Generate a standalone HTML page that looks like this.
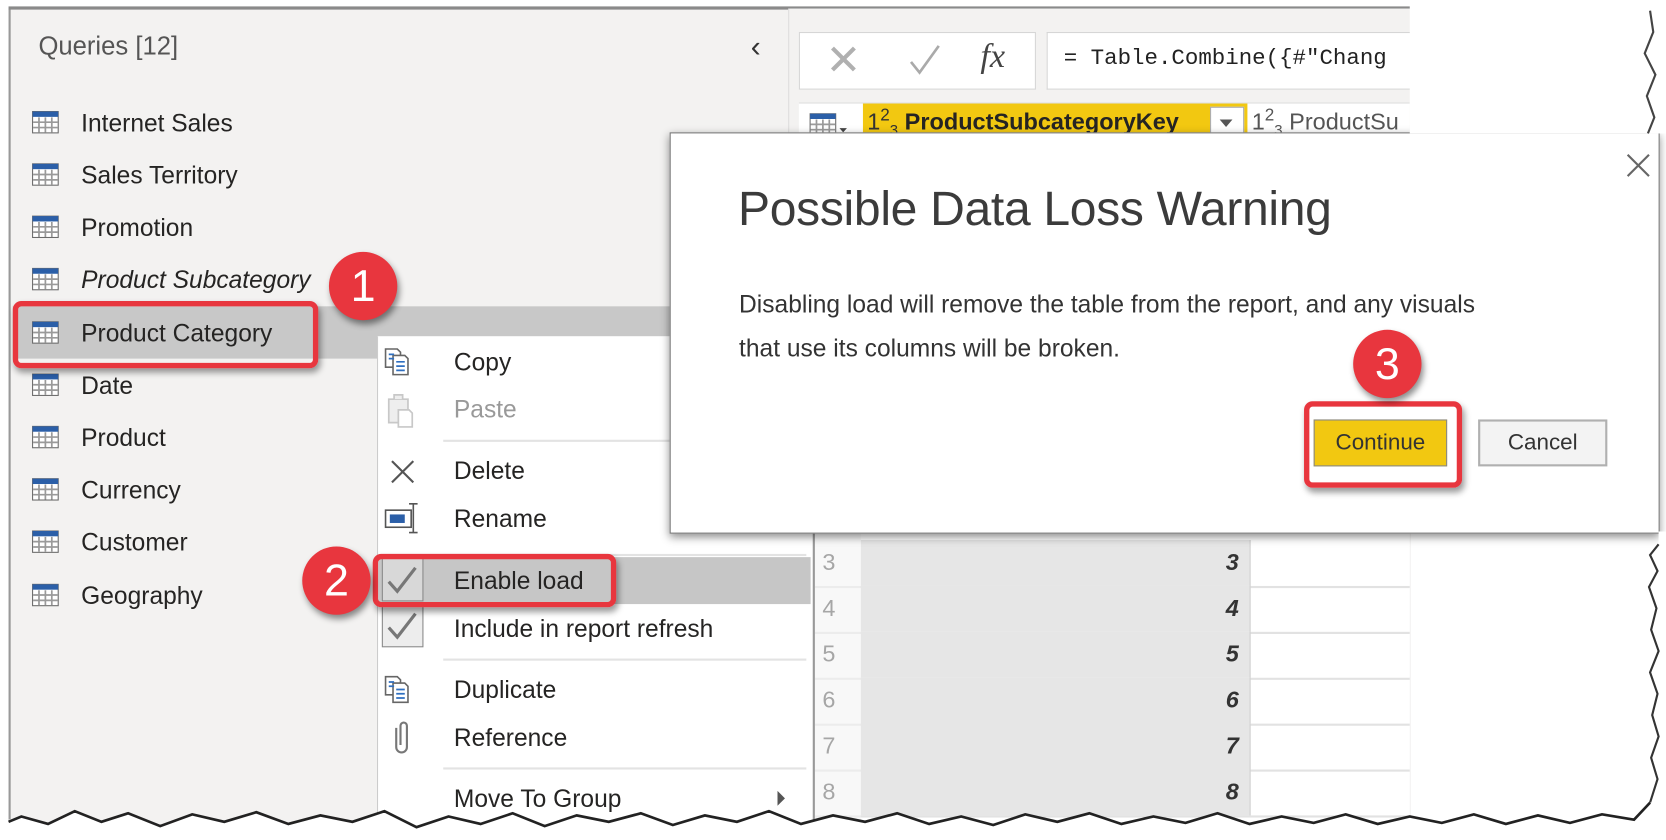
<!DOCTYPE html>
<html><head><meta charset="utf-8">
<style>
html,body{margin:0;padding:0;background:#fff;overflow:hidden;width:1666px;height:840px}
#w{position:absolute;left:0;top:0;width:1560px;height:787px;transform:scale(1.068,1.0673);transform-origin:0 0;font-family:"Liberation Sans",sans-serif;color:#222}
.a{position:absolute}
.q{position:absolute;left:76px;font-size:23px;color:#252423;line-height:28px}
.ti{position:absolute;left:30px;width:25px;height:21px}
.mi{position:absolute;left:425px;font-size:23px;color:#252423;line-height:28px}
.sep{position:absolute;left:415px;width:340px;height:2px;background:#e3e3e3}
.badge{position:absolute;width:64px;height:64px;border-radius:50%;background:#e8363e;color:#fff;font-size:42px;text-align:center;line-height:64px;box-shadow:2px 4px 6px rgba(0,0,0,.45)}
.redbox{position:absolute;border:5px solid #e8363e;border-radius:8px;box-shadow:2px 4px 6px rgba(0,0,0,.4)}
.row{position:absolute;left:760px;width:560px;height:43px;border-bottom:2px solid #e2e2e2}
.rn{position:absolute;left:10px;top:8px;font-size:22px;color:#333}
.rv{position:absolute;left:46px;width:364px;height:43px;background:#e6e6e6;border-right:1px solid #d0d0d0}
.rv span{position:absolute;right:10px;top:8px;font-size:22px;font-style:italic;font-weight:bold;color:#333}
</style></head><body><div id="w">
<!-- left panel -->
<div class="a" style="left:8px;top:8px;width:730px;height:770px;background:#f3f2f1;border-left:2px solid #999"></div>
<div class="a" style="left:8px;top:6px;width:1540px;height:3px;background:#8a8a8a"></div>
<div class="a" style="left:36px;top:30px;font-size:24px;color:#555">Queries [12]</div>
<div class="a" style="left:703px;top:28px;font-size:28px;color:#333">&#8249;</div>
<!-- highlight row -->
<div class="a" style="left:12px;top:287px;width:620px;height:49px;background:#c8c8c8"></div>

<svg class="a" style="left:0;top:0" width="60" height="600">
<defs><g id="ti"><rect x="0.5" y="0.5" width="24" height="20" fill="#fff" stroke="#6b6b6b"/><rect x="0.5" y="0.5" width="24" height="5" fill="#2b5fa8"/><path d="M1 10.5H24M1 15.5H24M6.5 6V20M12.5 6V20M18.5 6V20" stroke="#9a9a9a" stroke-width="1.6"/></g></defs>
<use href="#ti" x="30" y="104"/><use href="#ti" x="30" y="153"/><use href="#ti" x="30" y="202"/><use href="#ti" x="30" y="251"/><use href="#ti" x="30" y="301"/><use href="#ti" x="30" y="350"/><use href="#ti" x="30" y="399"/><use href="#ti" x="30" y="448"/><use href="#ti" x="30" y="497"/><use href="#ti" x="30" y="547"/>
</svg>
<div class="q" style="top:101px">Internet Sales</div>
<div class="q" style="top:150px">Sales Territory</div>
<div class="q" style="top:199px">Promotion</div>
<div class="q" style="top:248px;font-style:italic">Product Subcategory</div>
<div class="q" style="top:298px">Product Category</div>
<div class="q" style="top:347px">Date</div>
<div class="q" style="top:396px">Product</div>
<div class="q" style="top:445px">Currency</div>
<div class="q" style="top:494px">Customer</div>
<div class="q" style="top:544px">Geography</div>
<div class="redbox" style="left:12px;top:282px;width:276px;height:53px"></div>
<div class="badge" style="left:308px;top:236px">1</div>

<!-- right grid area -->
<div class="a" style="left:738px;top:8px;width:582px;height:770px;background:#f3f2f1;border-left:1px solid #ddd"></div>
<div class="a" style="left:748px;top:30px;width:220px;height:52px;background:#fff;border:1px solid #d6d6d6"></div>
<div class="a" style="left:773px;top:34px;font-size:40px;color:#b0b0b0;font-weight:100">&#x2715;</div>
<svg class="a" style="left:850px;top:40px" width="32" height="32"><path d="M3 18 L11 28 L29 3" stroke="#aaa" stroke-width="2.5" fill="none"/></svg>
<div class="a" style="left:918px;top:34px;font-size:32px;font-family:'Liberation Serif',serif;font-style:italic;color:#444">fx</div>
<div class="a" style="left:980px;top:30px;width:340px;height:52px;background:#fff;border:1px solid #d6d6d6;border-right:none"></div>
<div class="a" style="left:996px;top:44px;font-size:21px;font-family:'Liberation Mono',monospace;color:#222;white-space:nowrap;width:324px;overflow:hidden">= Table.Combine({#"Chang</div>
<div class="a" style="left:748px;top:96px;width:572px;height:34px;background:#fff;border-top:1px solid #ddd"></div>
<svg class="a" style="left:758px;top:106px" width="40" height="24"><rect x="0.5" y="0.5" width="24" height="20" fill="#fff" stroke="#6b6b6b"/><rect x="0.5" y="0.5" width="24" height="5" fill="#2b5fa8"/><path d="M1 10.5H24M1 15.5H24M6.5 6V20M12.5 6V20M18.5 6V20" stroke="#9a9a9a" stroke-width="1.6"/><path d="M28 14h7l-3.5 4z" fill="#444"/></svg>
<div class="a" style="left:808px;top:97px;width:360px;height:33px;background:#f2c811"></div>
<div class="a" style="left:812px;top:100px;font-size:22px;color:#333;white-space:nowrap">1<sup style="font-size:16px">2</sup><sub style="font-size:14px">3</sub> <b style="font-weight:bold;color:#252423">ProductSubcategoryKey</b></div>
<div class="a" style="left:1133px;top:100px;width:30px;height:28px;background:#fff;border:1px solid #aaa"></div>
<div class="a" style="left:1142px;top:112px;width:0;height:0;border-left:6px solid transparent;border-right:6px solid transparent;border-top:7px solid #555"></div>
<div class="a" style="left:1172px;top:100px;font-size:22px;color:#555;white-space:nowrap;width:148px;overflow:hidden">1<sup style="font-size:16px">2</sup><sub style="font-size:14px">3</sub> ProductSu</div>

<div class="a" style="left:760px;top:498px;width:560px;height:280px;background:#fff"></div>
<div class="row" style="top:506px"><div class="rv"><span>3</span></div><div class="rn">3</div></div>
<div class="row" style="top:549px"><div class="rv"><span>4</span></div><div class="rn">4</div></div>
<div class="row" style="top:592px"><div class="rv"><span>5</span></div><div class="rn">5</div></div>
<div class="row" style="top:635px"><div class="rv"><span>6</span></div><div class="rn">6</div></div>
<div class="row" style="top:678px"><div class="rv"><span>7</span></div><div class="rn">7</div></div>
<div class="row" style="top:721px"><div class="rv"><span>8</span></div><div class="rn">8</div></div>
<div class="a" style="left:760px;top:498px;width:46px;height:280px;background:#f3f3f3;opacity:.6"></div>

<!-- context menu -->
<div class="a" style="left:353px;top:315px;width:407px;height:465px;background:#fff;border-left:1px solid #ccc;border-right:2px solid #999"></div>
<div class="a" style="left:354px;top:522px;width:405px;height:44px;background:#c6c6c6"></div>
<svg class="a" style="left:355px;top:320px" width="60" height="420">
<g stroke="#666" fill="#fff" stroke-width="1.5"><path d="M6 7h11l3 3v14H6z"/><path d="M13 13h11l3 3v15H13z"/></g>
<path d="M9 12h5M9 16h5M16 19h8M16 23h8M16 27h8" stroke="#2f6fc0" stroke-width="1.6"/>
<g stroke="#c8c8c8" fill="#eee" stroke-width="1.6"><path d="M9 54h18v22H9z"/><path d="M14 54v-4h8v4"/><path d="M18 64h10l3 3v13H18z" fill="#fff"/></g>
<path d="M12 112L32 132M32 112L12 132" stroke="#555" stroke-width="2"/>
<rect x="6" y="158" width="24" height="16" fill="#fff" stroke="#555" stroke-width="1.5"/><rect x="10" y="162" width="14" height="8" fill="#2b5fa8"/><path d="M28 152h8M32 152v27M28 179h8" stroke="#555" stroke-width="1.5" fill="none"/>
<rect x="3" y="203" width="38" height="40" fill="#d8d8d8" stroke="#888"/><path d="M9 225l8 9 17-22" stroke="#777" stroke-width="3" fill="none"/>
<rect x="3" y="246" width="38" height="40" fill="#ededed" stroke="#888"/><path d="M9 268l8 9 17-22" stroke="#777" stroke-width="3" fill="none"/>
<g stroke="#666" fill="#fff" stroke-width="1.5"><path d="M6 314h11l3 3v14H6z"/><path d="M13 320h11l3 3v15H13z"/></g>
<path d="M9 319h5M9 323h5M16 326h8M16 330h8M16 334h8" stroke="#2f6fc0" stroke-width="1.6"/>
<path d="M16 362v18a5 5 0 0 0 10 0v-20a3 3 0 0 0-6 0v18" stroke="#777" stroke-width="2" fill="none"/>
</svg>
<div class="mi" style="top:325px">Copy</div>
<div class="mi" style="top:369px;color:#999">Paste</div>
<div class="sep" style="top:412px"></div>
<div class="mi" style="top:427px">Delete</div>
<div class="mi" style="top:472px">Rename</div>
<div class="sep" style="top:519px"></div>
<div class="mi" style="top:530px">Enable load</div>
<div class="mi" style="top:575px">Include in report refresh</div>
<div class="sep" style="top:617px"></div>
<div class="mi" style="top:632px">Duplicate</div>
<div class="mi" style="top:677px">Reference</div>
<div class="sep" style="top:719px"></div>
<div class="mi" style="top:734px">Move To Group</div>
<div class="a" style="left:728px;top:741px;width:0;height:0;border-top:7px solid transparent;border-bottom:7px solid transparent;border-left:7px solid #555"></div>
<div class="redbox" style="left:349px;top:519px;width:218px;height:40px"></div>
<div class="badge" style="left:283px;top:512px">2</div>

<!-- dialog -->
<div class="a" style="left:627px;top:124px;width:925px;height:374px;background:#fff;border:1px solid #777;box-shadow:0 3px 8px rgba(0,0,0,.45)"></div>
<svg class="a" style="left:1522px;top:143px" width="24" height="24"><path d="M2 2L22 22M22 2L2 22" stroke="#666" stroke-width="2"/></svg>
<div class="a" style="left:691px;top:170px;font-size:45px;color:#3b3b3b;white-space:nowrap;letter-spacing:-0.3px">Possible Data Loss Warning</div>
<div class="a" style="left:692px;top:265px;font-size:23px;color:#333;line-height:41px;width:840px">Disabling load will remove the table from the report, and any visuals<br>that use its columns will be broken.</div>
<div class="a" style="left:1230px;top:393px;width:125px;height:44px;background:#f2c811;border:1px solid #888;box-sizing:border-box;text-align:center;line-height:42px;font-size:21px;color:#333">Continue</div>
<div class="a" style="left:1384px;top:393px;width:121px;height:44px;background:#f3f3f3;border:2px solid #b0b0b0;box-sizing:border-box;text-align:center;line-height:40px;font-size:21px;color:#333">Cancel</div>
<div class="redbox" style="left:1221px;top:376px;width:138px;height:71px"></div>
<div class="badge" style="left:1267px;top:309px">3</div>

<!-- torn edges -->
<svg class="a" style="left:0;top:0" width="1560" height="787">
<path d="M1320 8 L1545 8 L1548 30 L1540 50 L1550 70 L1542 90 L1549 110 L1543 125 L1560 125 L1560 0 L1320 0Z" fill="#fff"/>
<path d="M1320 8 L1560 8 L1560 125 L1320 125Z" fill="#fff"/>
<path d="M1545 10 L1548 30 L1540 50 L1550 70 L1542 90 L1549 110 L1543 125" stroke="#444" stroke-width="2" fill="none"/>
<path d="M1320 498 L1553 498 L1553 510 L1545 520 L1552 535 L1544 550 L1551 570 L1546 590 L1553 610 L1545 630 L1552 650 L1547 670 L1553 690 L1546 710 L1552 730 L1547 748 L1560 748 L1560 498Z" fill="#fff"/>
<path d="M1553 510 L1545 520 L1552 535 L1544 550 L1551 570 L1546 590 L1553 610 L1545 630 L1552 650 L1547 670 L1553 690 L1546 710 L1552 730 L1545 752" stroke="#333" stroke-width="2" fill="none"/>
<path d="M0 787 L0 770 L20 765 L45 772 L70 760 L95 770 L120 762 L150 774 L180 763 L210 770 L240 761 L270 772 L300 764 L330 770 L360 760 L390 775 L420 765 L450 772 L480 762 L510 774 L540 764 L570 770 L600 762 L630 773 L660 764 L690 770 L720 760 L750 772 L780 764 L810 770 L840 762 L870 772 L900 765 L930 773 L960 763 L990 770 L1020 762 L1050 772 L1080 765 L1110 771 L1140 762 L1170 772 L1200 765 L1230 771 L1260 763 L1290 772 L1320 765 L1350 771 L1380 763 L1410 772 L1440 764 L1470 771 L1500 763 L1530 768 L1545 752 L1560 752 L1560 787Z" fill="#fff"/>
<path d="M8 770 L20 765 L45 772 L70 760 L95 770 L120 762 L150 774 L180 763 L210 770 L240 761 L270 772 L300 764 L330 770 L360 760 L390 775 L420 765 L450 772 L480 762 L510 774 L540 764 L570 770 L600 762 L630 773 L660 764 L690 770 L720 760 L750 772 L780 764 L810 770 L840 762 L870 772 L900 765 L930 773 L960 763 L990 770 L1020 762 L1050 772 L1080 765 L1110 771 L1140 762 L1170 772 L1200 765 L1230 771 L1260 763 L1290 772 L1320 765 L1350 771 L1380 763 L1410 772 L1440 764 L1470 771 L1500 763 L1530 768 L1545 752" stroke="#222" stroke-width="2.5" fill="none"/>
</svg>
</div></body></html>
